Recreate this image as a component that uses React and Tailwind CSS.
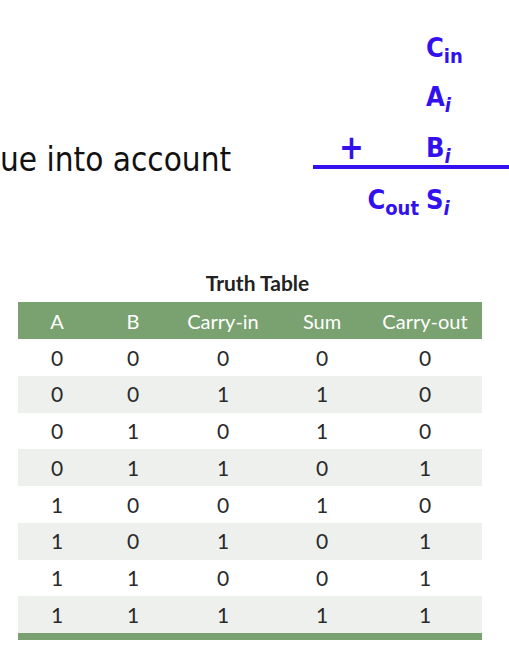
import React from "react";

const rows = [
  [0, 0, 0, 0, 0],
  [0, 0, 1, 1, 0],
  [0, 1, 0, 1, 0],
  [0, 1, 1, 0, 1],
  [1, 0, 0, 1, 0],
  [1, 0, 1, 0, 1],
  [1, 1, 0, 0, 1],
  [1, 1, 1, 1, 1],
];

const cols = ["w-[78px]", "w-[74px]", "w-[106px]", "w-[92px]", "w-[114px]"];
const heads = ["A", "B", "Carry-in", "Sum", "Carry-out"];

function Sub({ children, italic }) {
  return (
    <span className={"text-[20px] leading-none align-[-6px] " + (italic ? "italic" : "")}>
      {children}
    </span>
  );
}

function EqRow({ left, leftClass, main, sub, italic, className }) {
  return (
    <div className={"flex h-[32px] " + (className || "")}>
      <div className={"w-[113px] flex " + (leftClass || "")}>{left}</div>
      <div className="whitespace-nowrap">
        {main}
        <Sub italic={italic}>{sub}</Sub>
      </div>
    </div>
  );
}

export default function App() {
  return (
    <div className="w-[509px] h-[651px] bg-white overflow-hidden">
      <div className="flex h-[232px]">
        <div className="w-[313px] pt-[140px]">
          <span className="font-['DejaVu_Sans_Condensed','DejaVu_Sans',sans-serif] [font-stretch:condensed] text-[33px] leading-[40px] text-[#111] whitespace-nowrap">
            ue into account
          </span>
        </div>
        <div className="w-[196px] pt-[32px] flex flex-col text-[#3311ee] font-bold font-['DejaVu_Sans_Condensed','DejaVu_Sans',sans-serif] [font-stretch:condensed] text-[27px] leading-[32px]">
          <EqRow main="C" sub="in" />
          <EqRow main="A" sub="i" italic className="mt-[17px]" />
          <EqRow
            main="B"
            sub="i"
            italic
            className="mt-[19px]"
            leftClass="pl-[26px]"
            left={<span className="text-[33px]">+</span>}
          />
          <div className="h-[4px] bg-[#3311ee] mt-[1px]" />
          <EqRow
            main="S"
            sub="i"
            italic
            className="mt-[15px]"
            leftClass="justify-end pr-[7px]"
            left={
              <span className="whitespace-nowrap">
                C<Sub>out</Sub>
              </span>
            }
          />
        </div>
      </div>
      <div className="pt-[39px] font-['Lato',sans-serif]">
        <div className="text-center pl-[6px] font-bold text-[21px] leading-[24px] text-[#222]">
          Truth Table
        </div>
        <div className="ml-[18px] w-[464px] mt-[7px]">
          <div className="flex h-[37px] items-center bg-[#7aa170] text-white text-[20px]">
            {heads.map((h, i) => (
              <div key={h} className={cols[i] + " text-center"}>
                {h}
              </div>
            ))}
          </div>
          {rows.map((r, ri) => (
            <div
              key={ri}
              className={
                "flex h-[36.75px] items-center text-[21px] text-[#2a2a2a] " +
                (ri % 2 === 1 ? "bg-[#edf0ec]" : "bg-white")
              }
            >
              {r.map((v, ci) => (
                <div key={ci} className={cols[ci] + " text-center"}>
                  {v}
                </div>
              ))}
            </div>
          ))}
          <div className="h-[7px] bg-[#7aa170]" />
        </div>
      </div>
    </div>
  );
}
